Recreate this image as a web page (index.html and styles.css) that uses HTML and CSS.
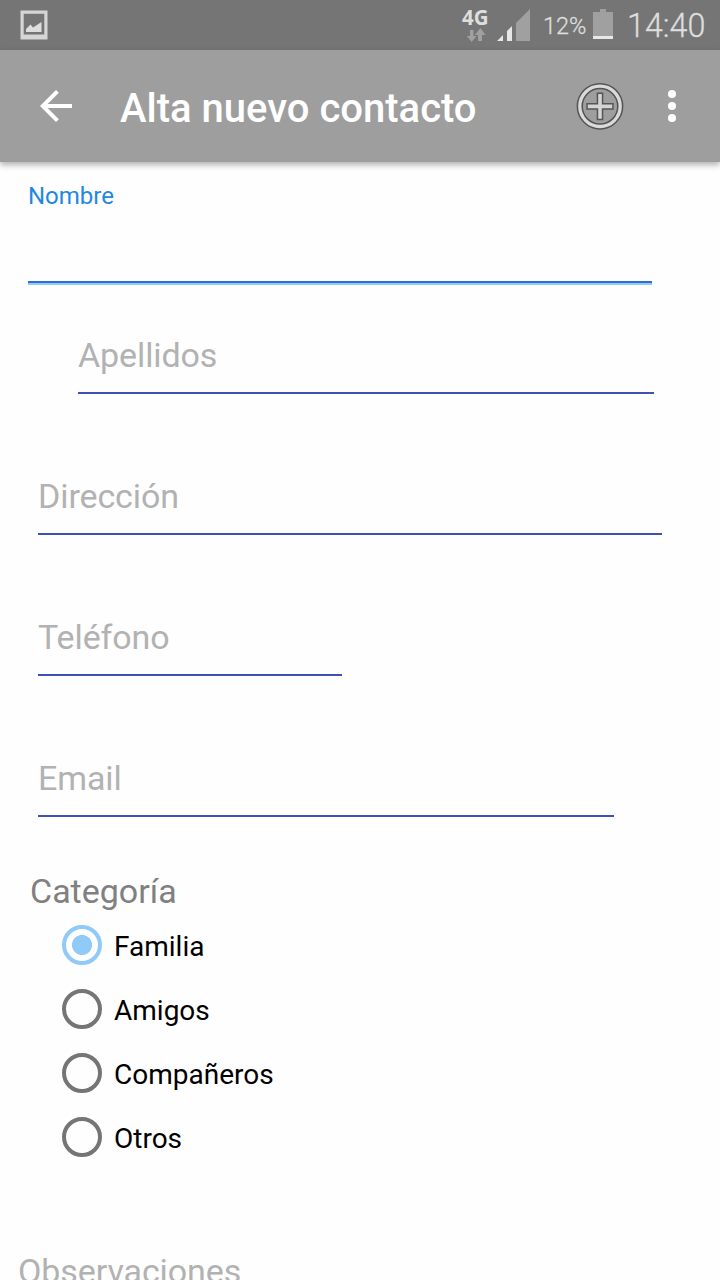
FILE: index.html
```html
<!DOCTYPE html>
<html lang="es">
<head>
<meta charset="utf-8">
<title>Alta nuevo contacto</title>
<link rel="stylesheet" href="styles.css">
</head>
<body>
<div class="status-bar">
  <svg class="status-picture" width="28" height="30" viewBox="0 0 28 30">
    <path fill="#d6d6d6" fill-rule="evenodd" d="M.5 .5H27.500V29.500H.5ZM3.700 3.700V24.500H24.300V3.700Z"/>
    <path fill="#dedede" d="M6 22V19L10.500 14.500L13 17.500L21.500 12V22Z"/>
  </svg>
  <div class="network">
    <span class="network-type">4G</span>
    <svg class="network-arrows" width="20" height="15" viewBox="0 0 20 15">
      <path fill="#a0a0a0" d="M4 2H7.500V8H10.500L5.700 14L.8 8H4ZM12 13V7H9L14.300 0L19.500 7H16V13Z"/>
    </svg>
  </div>
  <svg class="signal" width="34" height="32" viewBox="0 0 34 32">
    <path fill="#e6e6e6" d="M0 32L6 26V32ZM10 32V22L15 17V32Z"/>
    <path fill="#a0a0a0" d="M19 32V14L33 0V32Z"/>
  </svg>
  <span class="battery-level">12%</span>
  <svg class="battery" width="20" height="30" viewBox="0 0 20 30">
    <path fill="#a0a0a0" d="M0 3H7V0H13V3H20V27H0Z"/>
    <path fill="#e8e8e8" d="M0 27H20V30H0Z"/>
  </svg>
  <span class="clock">14:40</span>
</div>

<header class="app-bar">
  <svg class="back" width="32" height="32" viewBox="0 0 32 32">
    <path fill="#fff" d="M32 14H7.660L18.840 2.820L16 0L0 16L16 32L18.820 29.180L7.660 18H32Z"/>
  </svg>
  <h1 class="title">Alta nuevo contacto</h1>
  <svg class="add" width="48" height="48" viewBox="0 0 48 48" fill="none">
    <circle cx="24" cy="24.300" r="20.200" stroke="#555" stroke-width="6.400"/>
    <circle cx="24" cy="24.300" r="20.200" stroke="#dadada" stroke-width="3.300"/>
    <path stroke="#555" stroke-width="6.600" stroke-linejoin="round" d="M24 10.500V38.300M10.300 24.400H37.700"/>
    <path stroke="#d4d4d4" stroke-width="3.600" d="M24 12V36.800M11.800 24.400H36.200"/>
  </svg>
  <svg class="more" width="8" height="32" viewBox="0 0 8 32" fill="#fff">
    <circle cx="4" cy="4" r="4"/><circle cx="4" cy="16" r="4"/><circle cx="4" cy="28" r="4"/>
  </svg>
</header>

<main class="form">
  <div class="field field-name"><span class="floating-label">Nombre</span></div>
  <div class="field field-surname"><span class="hint">Apellidos</span></div>
  <div class="field field-address"><span class="hint">Dirección</span></div>
  <div class="field field-phone"><span class="hint">Teléfono</span></div>
  <div class="field field-email"><span class="hint">Email</span></div>

  <h2 class="category-title">Categoría</h2>
  <div class="options">
    <div class="option"><span class="radio radio-on"></span><span>Familia</span></div>
    <div class="option"><span class="radio"></span><span>Amigos</span></div>
    <div class="option"><span class="radio"></span><span>Compañeros</span></div>
    <div class="option"><span class="radio"></span><span>Otros</span></div>
  </div>
  <div class="notes hint">Observaciones</div>
</main>
</body>
</html>
```
FILE: styles.css
```css
* { box-sizing: border-box; }

body {
  margin: 0;
  height: 1280px;
  overflow: hidden;
  display: flex;
  flex-direction: column;
  background: #fefefe;
  font-family: Roboto, sans-serif;
}

svg { display: block; flex: none; }

.status-bar {
  flex: none;
  height: 50px;
  display: flex;
  align-items: flex-start;
  padding-left: 20px;
  background: #757575;
  color: #dedede;
  white-space: nowrap;
}
.status-picture { margin-top: 10px; }
.network { width: 28px; margin: 7px 0 0 414px; }
.network-type {
  display: block;
  height: 21px;
  font: bold 20.5px/20px "Noto Sans", sans-serif;
}
.network-arrows { margin-left: 4px; }
.signal { margin: 9px 0 0 7px; }
.battery-level {
  width: 46px;
  margin-left: 12px;
  font-size: 23.5px;
  line-height: 52px;
}
.battery { margin: 9px 0 0 4px; }
.clock {
  margin-left: 14px;
  font-size: 32.3px;
  line-height: 52px;
}
.battery-level, .clock {
  height: 50px;
  font-weight: 300;
  -webkit-text-stroke: .3px #dedede;
}

.app-bar {
  flex: none;
  position: relative;
  height: 112px;
  display: flex;
  align-items: center;
  padding: 0 44px 0 40px;
  background: #9e9e9e;
  box-shadow: 0 3px 6px rgba(0, 0, 0, .3);
}
.title {
  flex: 1;
  margin: 0 0 0 48px;
  padding-top: 6px;
  color: #fff;
  font-size: 40px;
  font-weight: 500;
  line-height: 48px;
}
.add { margin-right: 44px; }

.form { flex: 1; min-height: 0; overflow: hidden; }

.field {
  display: flex;
  flex-direction: column;
  justify-content: flex-end;
  border-bottom: 2px solid #3f51b5;
}
.hint {
  color: #b2b2b2;
  font-size: 34px;
  line-height: 40px;
  letter-spacing: -.1px;
}
.field .hint { padding-bottom: 17px; height: 57px; }

.field-name {
  justify-content: flex-start;
  width: 624px;
  height: 123px;
  margin-left: 28px;
  padding-top: 20px;
  border-bottom: 2px solid #90caf9;
  box-shadow: inset 0 -2px #2f6ccf;
}
.floating-label {
  color: #1e88e5;
  font-size: 24px;
  line-height: 28px;
}
.field-surname { width: 576px; height: 109px; margin-left: 78px; }
.field-address, .field-phone, .field-email { height: 141px; margin-left: 38px; }
.field-address { width: 624px; }
.field-phone { width: 304px; }
.field-email { width: 576px; }

.category-title {
  margin: 53px 0 1px 30px;
  color: #808080;
  font-size: 34px;
  font-weight: 400;
  line-height: 42px;
}
.options { padding-left: 62px; }
.option {
  height: 64px;
  display: flex;
  align-items: center;
  gap: 12px;
  color: #000;
  font-size: 28px;
  line-height: 32px;
}
.option span:last-child { padding-top: 4px; }
.radio {
  width: 40px;
  height: 40px;
  border: 4px solid #757575;
  border-radius: 50%;
}
.radio-on {
  border-color: #90caf9;
  background: radial-gradient(circle, #90caf9 9.700px, transparent 10.300px);
}
.notes { padding: 82px 0 0 18px; }
```
